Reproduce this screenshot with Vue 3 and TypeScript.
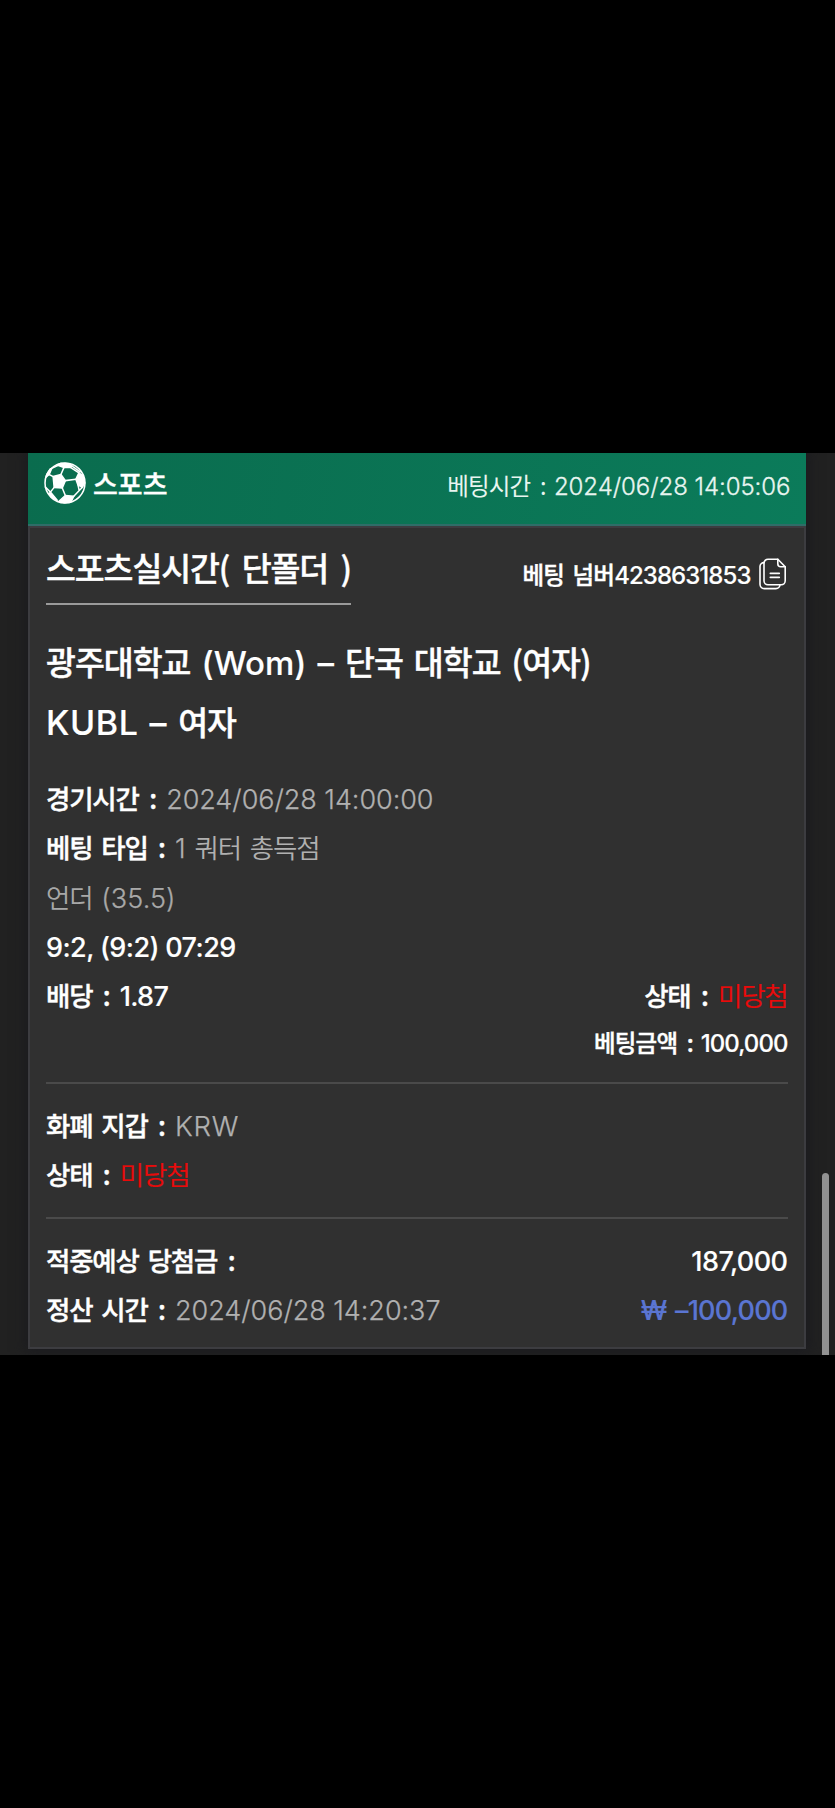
<script setup lang="ts">
interface Field {
  label: string
  value: string
}

const betTime = '2024/06/28 14:05:06'
const betNumber = '4238631853'
const matchTime: Field = { label: '경기시간', value: '2024/06/28 14:00:00' }
const settleTime: Field = { label: '정산 시간', value: '2024/06/28 14:20:37' }
const wallet: Field = { label: '화폐 지갑', value: 'KRW' }
const status: Field = { label: '상태', value: '미당첨' }
</script>

<template>
  <div class="screen">
    <main class="viewport">
      <section class="card">
        <header class="head">
          <svg class="ball" viewBox="133 67 124 124" fill="none" stroke="#fff" stroke-width="4.500" stroke-linejoin="round" stroke-linecap="round">
            <circle cx="195" cy="129" r="59" />
            <path fill="#fff" d="M160 110 183 104 196 122 187 144 163 142Z" />
            <path fill="#fff" d="M227 118 236 99 248 107 253 129 245 142 233 134Z" />
            <path fill="#fff" d="M172 76 182 71 208 72 216 79 211 83 192 83Z" />
            <path fill="#fff" d="M196 166 221 168 213 184 193 187 177 183Z" />
            <path fill="#fff" d="M153 157 172 180 158 172 147 160Z" />
            <path fill="#fff" d="M139 112 148 104 152 87 142 102Z" />
            <path d="M183 104 192 83M160 110 148 104M163 142 152 156M187 144 196 166M196 122 227 118M211 83 236 99M221 168 237 151 233 134M237 151 248 140M148 104 156 86 175 77M216 79 240 96M152 156 137 141" />
          </svg>
          <span class="category">스포츠</span>
          <span class="bet-time">베팅시간<i class="colon">:</i><span class="n">{{ betTime }}</span></span>
        </header>

        <div class="body">
          <div class="title-row">
            <h1 class="title">스포츠실시간( 단폴더 )</h1>
            <div class="bet-number">
              <span>베팅 넘버<span class="n">{{ betNumber }}</span></span>
              <svg class="copy" viewBox="0 0 28 32" fill="none" stroke="#fff" stroke-width="1.6" stroke-linejoin="round" stroke-linecap="round">
                <path d="M9 1.2h9.8l7.4 7.6v14a4 4 0 0 1-4 4H9a4 4 0 0 1-4-4V5.2a4 4 0 0 1 4-4Z" />
                <path d="M18.8 1.2v4.6a3 3 0 0 0 3 3h4.4M5 4.6a4 4 0 0 0-4 4v17.600a4.400 4.400 0 0 0 4.400 4.400H17a4 4 0 0 0 4-3.800M11.300 15.400h9M11.300 19.400h9" />
              </svg>
            </div>
          </div>

          <h2 class="match">광주대학교 <span class="n">(Wom)</span> <span class="n dash">–</span> 단국 대학교 (여자)</h2>
          <h2 class="match league"><span class="n">KUBL</span> <span class="n dash">–</span> 여자</h2>

          <div class="rows first">
            <p class="row">{{ matchTime.label }}<i class="colon">:</i><span class="n muted">{{ matchTime.value }}</span></p>
            <p class="row">베팅 타입<i class="colon">:</i><span class="muted"><span class="n">1</span> 쿼터 총득점</span></p>
            <p class="row muted">언더 <span class="n pick">(35.5)</span></p>
            <p class="row"><span class="n score">9:2, (9:2) 07:29</span></p>
            <div class="row split">
              <p>배당<i class="colon">:</i><span class="n odds">1.87</span></p>
              <p>{{ status.label }}<i class="colon">:</i><span class="lost">{{ status.value }}</span></p>
            </div>
            <p class="row small">베팅금액<i class="colon">:</i><span class="n">100,000</span></p>
          </div>

          <hr class="rule" />

          <div class="rows">
            <p class="row">{{ wallet.label }}<i class="colon">:</i><span class="n muted currency">{{ wallet.value }}</span></p>
            <p class="row">{{ status.label }}<i class="colon">:</i><span class="lost">{{ status.value }}</span></p>
          </div>

          <hr class="rule second" />

          <div class="rows">
            <div class="row split">
              <p>적중예상 당첨금<i class="colon">:</i></p>
              <p class="n amount">187,000</p>
            </div>
            <div class="row split">
              <p>{{ settleTime.label }}<i class="colon">:</i><span class="n muted">{{ settleTime.value }}</span></p>
              <p class="n amount loss"><span class="won">₩</span>–100,000</p>
            </div>
          </div>
        </div>
      </section>
      <div class="scrollbar"></div>
    </main>
  </div>
</template>

<style>
body {
  margin: 0;
  background: #000;
}
</style>

<style scoped>
.screen {
  box-sizing: border-box;
  height: 1808px;
  padding-top: 453px;
  background: #000;
  color: #fff;
  font-family: "Noto Sans CJK KR", sans-serif;
  font-weight: 500;
}
.viewport {
  position: relative;
  box-sizing: border-box;
  height: 902px;
  padding: 0 29px 0 28px;
  overflow: hidden;
  background: #212121;
}
.card {
  height: 896px;
  box-shadow: 0 0 12px 3px #1b1b1f;
}
h1, h2, p {
  margin: 0;
  font-weight: 500;
}
.category, .title, .match, .row, .bet-number {
  -webkit-text-stroke: 0.400px currentColor;
}
.n {
  font-family: Inter, "Noto Sans CJK KR", sans-serif;
  line-height: 1;
  word-spacing: 0;
  -webkit-text-stroke: 0.150px currentColor;
}
.colon {
  display: inline-block;
  margin-left: 10.400px;
  width: 17px;
  font-style: normal;
  line-height: 1;
  letter-spacing: 0;
  text-align: left;
}
.head {
  box-sizing: border-box;
  display: flex;
  align-items: center;
  height: 72.500px;
  padding: 0 15.500px 10px 16px;
  border-bottom: 2px solid #2f6d68;
  background: linear-gradient(100deg, #0a6c4e, #0b7b5a);
}
.ball {
  width: 42px;
  height: 42px;
}
.category {
  margin: 2px 0 0 7px;
  font-size: 27px;
  line-height: 40px;
}
.bet-time {
  margin: 3px 0 0 auto;
  font-size: 23.500px;
  font-weight: 400;
  line-height: 40px;
  letter-spacing: -0.800px;
  color: #e8f5f0;
}
.bet-time .n {
  font-size: 24px;
  font-weight: 300;
  letter-spacing: -0.050px;
  -webkit-text-stroke: 0.300px currentColor;
}
.bet-time .colon {
  margin-left: 9.500px;
  width: 14px;
}
.body {
  box-sizing: border-box;
  height: 823.500px;
  padding: 9px 16.500px 0 16px;
  border: 2px solid #3c3c40;
  background: #303030;
}
.title-row {
  display: flex;
  justify-content: space-between;
  align-items: flex-start;
  height: 94px;
}
.title {
  margin-top: -2px;
  border-bottom: 2px solid #9a9a9a;
  padding-bottom: 5.500px;
  font-size: 32.500px;
  line-height: 63px;
  letter-spacing: -1.100px;
  word-spacing: 6.200px;
  white-space: nowrap;
}
.bet-number {
  display: flex;
  align-items: center;
  margin-top: 13px;
  font-size: 23.500px;
  line-height: 48px;
  letter-spacing: -0.800px;
  word-spacing: 4px;
}
.bet-number .n {
  font-size: 24px;
  letter-spacing: -0.950px;
}
.copy {
  width: 28px;
  height: 32px;
  margin: 0 0.500px 0 8.500px;
}
.match {
  font-size: 32.500px;
  line-height: 60px;
  letter-spacing: -1px;
  word-spacing: 4.700px;
  white-space: nowrap;
}
.match .n {
  font-size: 33px;
  letter-spacing: 0;
}
.league .n {
  font-size: 34px;
  letter-spacing: 0.600px;
}
.rows {
  margin-top: 16px;
}
.first {
  margin-top: 22.700px;
}
.row {
  height: 49.200px;
  font-size: 26.500px;
  line-height: 49.200px;
  letter-spacing: -1.200px;
  word-spacing: 4.200px;
  white-space: nowrap;
}
.row .n {
  font-size: 27px;
  letter-spacing: 0;
}
.split {
  display: flex;
  justify-content: space-between;
}
.row.small {
  height: 47px;
  font-size: 23.500px;
  line-height: 47px;
  letter-spacing: -0.800px;
  text-align: right;
}
.row.small .n {
  font-size: 24px;
  letter-spacing: -0.950px;
}
.small .colon {
  margin-left: 9.500px;
  width: 14px;
}
.muted {
  color: #b0b0b0;
  font-weight: 350;
  -webkit-text-stroke: 0;
}
.n.muted, .muted .n {
  letter-spacing: -0.050px;
  -webkit-text-stroke: 0.250px currentColor;
}
.row.muted {
  color: #a8a8a8;
}
.row .currency {
  font-size: 27.500px;
  letter-spacing: 0.700px;
}
.row .pick {
  letter-spacing: 0.100px;
}
.row .score {
  letter-spacing: -0.550px;
  word-spacing: -0.300px;
}
.row .odds {
  letter-spacing: -0.700px;
}
.lost {
  color: #ea0a0a;
  font-weight: 350;
  -webkit-text-stroke: 0.150px currentColor;
}
.row .amount {
  line-height: 53px;
  letter-spacing: -0.550px;
}
.row .loss {
  letter-spacing: -0.750px;
  color: #5a75d2;
}
.won {
  margin-right: 8.500px;
}
.rule {
  height: 2px;
  margin: 16px 0 0;
  border: 0;
  background: #4a4a4a;
}
.second {
  margin-top: 18.500px;
}
.scrollbar {
  position: absolute;
  right: 6px;
  top: 720px;
  width: 7px;
  height: 190px;
  border-radius: 4px;
  background: #929292;
}
</style>
